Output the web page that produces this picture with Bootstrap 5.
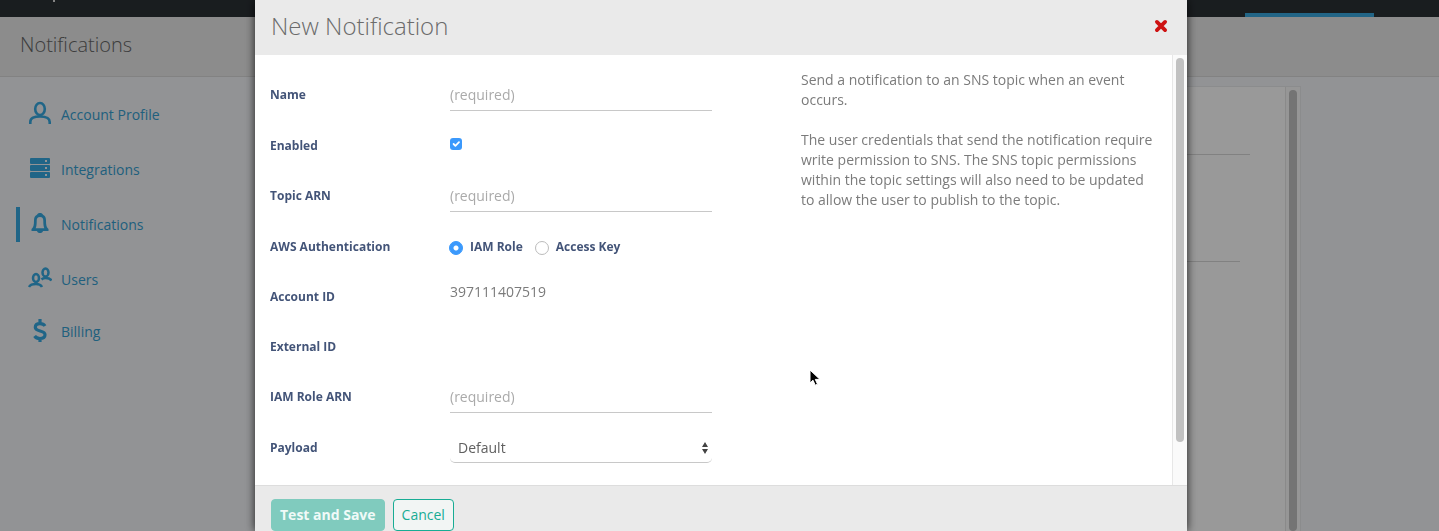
<!DOCTYPE html>
<html lang="en">
<head>
<meta charset="utf-8">
<meta name="viewport" content="width=device-width, initial-scale=1">
<title>New Notification</title>
<link rel="stylesheet" href="https://cdn.jsdelivr.net/npm/bootstrap@5.3.0/dist/css/bootstrap.min.css">
<style>
  body { font-family: "Open Sans", "Noto Sans", sans-serif; font-size: 14px; line-height: 20px; color: #7b7b7b; background: #f3f5f8; }
  .app-shell { height: 100vh; overflow: hidden; }
  .top-strip { height: 17px; background: #2b3135; padding-right: 65px; padding-left: 53px; }
  .brand-stem { width: 2px; height: 2px; background: #ddd; }
  .active-tab { width: 129px; height: 4px; background: #39a9df; }
  .page-head { height: 60px; padding: 0 20px; background: #e9e9e9; border-bottom: 1px solid #d9d9d9; }
  .page-head h1 { font-size: 20px; line-height: 56px; font-weight: 300; color: #666; }
  .side-nav { width: 260px; padding: 10px 16px; }
  .side-nav a { height: 55px; padding-left: 8px; border-left: 4px solid transparent; color: #36a0d2; gap: 9px; }
  .side-nav a::before { content: ""; width: 4px; height: 35px; flex: none; margin-left: -12px; margin-right: -1px; }
  .side-nav a.active::before { background: #36a9e1; }
  .side-nav a:last-child { height: 50px; }
  .side-nav svg { width: 24px; height: 24px; color: #36a9e1; flex: none; margin-bottom: 4px; }
  .panel-sheet { background: #fff; margin: 9px 138px 0 0; border: 1px solid #e8eaec; border-bottom: 0; }
  .sheet-body { padding-top: 67px; }
  .panel-sheet hr { margin: 0 35px 106px 0; border-color: #d8d8d8; opacity: 1; }
  .panel-sheet hr + hr { margin-right: 45px; }
  .scroll-track { width: 15px; border-left: 1px solid #e7e7e7; background: #fafafa; padding: 3px 4px 0 3px; flex: none; }
  .scroll-thumb { width: 8px; border-radius: 4px; background: #c1c1c1; }
  .backdrop-dim { --bs-backdrop-opacity: .4; }
  .notify-modal { padding-left: 3px !important; overflow: hidden; }
  .notify-modal .modal-dialog { max-width: 932px; height: 100vh; margin: 0 auto; }
  .notify-modal .modal-content { height: 100%; border: 0; border-radius: 0; box-shadow: 0 0 9px rgba(0,0,0,.8); color: inherit; }
  .notify-modal .modal-header { height: 55px; padding: 0 16px 4px; border: 0; border-radius: 0; background: #eaeaea; }
  .modal-title { font-size: 24px; line-height: 50px; font-weight: 300; color: #6b6b6b; }
  .close-x { width: 20px; height: 20px; color: #ce1212; }
  .form-pane { width: 530px; padding: 25px 0 0 15px; flex: none; }
  .field-row { display: flex; align-items: flex-start; min-height: 30px; margin-bottom: 20px; }
  .field-name { width: 180px; flex: none; font-size: 12px; line-height: 30px; font-weight: 700; color: #435478; }
  .choice-name { font-size: 12px; line-height: 30px; font-weight: 700; color: #435478; margin: 0 13px 0 7px; }
  .line-input { width: 262px; height: 31px; padding: 0 0 2px; font-size: 14px; line-height: 20px; border: 0; border-bottom: 1px solid #c8c8c8; border-radius: 0; background: transparent; }
  .line-input::placeholder { color: #aaa; }
  .payload-select { width: 262px; height: 30px; padding: 0 8px; font-size: 14px; line-height: 20px; color: #606060; border: 0; border-bottom: 1px solid #c8c8c8; border-radius: 5px;
    background: #fff url("data:image/svg+xml,%3Csvg xmlns='http://www.w3.org/2000/svg' viewBox='0 0 6 12'%3E%3Cpath fill='%23444' d='M0 5L3 0l3 5zM0 7h6L3 12z'/%3E%3C/svg%3E") no-repeat right 4px center / 6px 12px; }
  .tick { width: 12px; height: 12px; margin: 7px 0 0; border: 0; border-radius: 3px !important; }
  .tick:checked { background-color: #3b99fc; }
  .dot { width: 14px; height: 14px; margin: 9px 0 0 -1px; border-color: #bbb; }
  .dot:checked { border-color: #3b99fc; background-color: #3b99fc; background-image: radial-gradient(circle, #fff 0 2px, transparent 3px); }
  .help-pane { padding: 15px 17px 0 16px; }
  .help-pane p { margin-bottom: 20px; }
  .notify-modal .modal-footer { height: 46px; padding: 13px 16px 0; gap: 8px; align-items: flex-start; justify-content: flex-start; background: #eaeaea; border-top: 1px solid #ddd; border-radius: 0; flex-wrap: nowrap; }
  .modal-footer .btn { margin: 0; height: 32px; padding: 0 8px; font-size: 14px; line-height: 30px; border-radius: 4px; }
  .btn-save, .btn-save:disabled { background: #80cbbe; border-color: #80cbbe; color: #f0faf8; font-weight: 700; opacity: 1; }
  .btn-cancel { background: #f2f5f4; border-color: #18ac94; color: #18ac94; }
  .pointer { position: absolute; left: 809px; top: 369px; width: 12px; height: 18px; z-index: 2000; }
</style>
</head>
<body>
<div class="app-shell d-flex flex-column">
  <div class="top-strip d-flex justify-content-between">
    <span class="brand-stem"></span>
    <span class="active-tab align-self-end"></span>
  </div>
  <header class="page-head"><h1 class="m-0">Notifications</h1></header>
  <div class="d-flex flex-grow-1">
    <nav class="side-nav d-flex flex-column flex-shrink-0" aria-label="Account">
      <a href="#" class="d-flex align-items-center text-decoration-none">
        <svg viewBox="0 0 24 24" fill="none" stroke="currentColor" stroke-width="2.600"><ellipse cx="12" cy="8" rx="4.800" ry="6"/><path d="M2.300 23v-2c0-4 4-5.500 9.700-5.500s9.700 1.500 9.700 5.500v2"/></svg>
        Account Profile</a>
      <a href="#" class="d-flex align-items-center text-decoration-none">
        <svg viewBox="0 0 24 24" fill="currentColor"><path fill-rule="evenodd" d="M3 2h18q1 0 1 1v4q0 1-1 1H3Q2 8 2 7V3q0-1 1-1zm14 2v2h2V4zM3 9h18q1 0 1 1v4q0 1-1 1H3q-1 0-1-1v-4q0-1 1-1zm14 2v2h2v-2zM3 16h18q1 0 1 1v4q0 1-1 1H3q-1 0-1-1v-4q0-1 1-1zm14 2v2h2v-2z"/></svg>
        Integrations</a>
      <a href="#" class="active d-flex align-items-center text-decoration-none">
        <svg viewBox="0 0 24 24" fill="currentColor"><path fill-rule="evenodd" d="M12 2c1.500 0 2.500.6 3 1.700 2.300 1 3 3.300 3 5.800 0 4 .4 6.400 2 8l.5.500v2H15c-.4 1.400-1.500 2-3 2s-2.600-.6-3-2H3.500v-2l.5-.5c1.600-1.600 2-4 2-8C6 7 6.700 4.700 9 3.700 9.500 2.600 10.500 2 12 2zm0 4C9.500 6 8.700 7.500 8.700 10c0 3-.2 5.500-1 7.300h8.600c-.8-1.800-1-4.300-1-7.300 0-2.500-.8-4-3.300-4z"/></svg>
        Notifications</a>
      <a href="#" class="d-flex align-items-center text-decoration-none">
        <svg viewBox="0 0 24 24" fill="none" stroke="currentColor" stroke-width="2.500"><ellipse cx="8" cy="12" rx="3" ry="4"/><path d="M1 21c1-2 3.500-3 7-3s5 1 6 3M8 15v3"/><ellipse cx="17.500" cy="6.500" rx="3" ry="4"/><path d="M13.500 13.500c1-1 2.500-1.500 4-1.500 3 0 5 1 6 2.500M17.500 10v2"/></svg>
        Users</a>
      <a href="#" class="d-flex align-items-center text-decoration-none">
        <svg viewBox="0 0 24 24" fill="none" stroke="currentColor" stroke-width="3.200"><g transform="translate(0 1)"><path d="M17 7c-1-1.600-2.700-2.300-5-2.300-3 0-4.700 1.300-4.700 3.600 0 5 9.700 2.400 9.700 7.500 0 2.400-2 3.700-5 3.700-2.500 0-4.400-1-5.400-2.500M12 0v5m0 14v4"/></g></svg>
        Billing</a>
    </nav>
    <main class="panel-sheet d-flex flex-grow-1">
      <div class="sheet-body flex-grow-1"><hr><hr></div>
      <div class="scroll-track"><div class="scroll-thumb h-100"></div></div>
    </main>
  </div>
</div>

<div class="modal-backdrop show backdrop-dim"></div>
<div class="modal notify-modal d-block" tabindex="-1" role="dialog" aria-labelledby="dialogTitle">
  <div class="modal-dialog">
    <form class="modal-content">
      <div class="modal-header d-flex justify-content-between align-items-center">
        <h2 class="modal-title" id="dialogTitle">New Notification</h2>
        <button type="button" class="close-x btn p-0 border-0 d-flex align-items-center justify-content-center" aria-label="Close">
          <svg width="14" height="14" viewBox="0 0 14 14" stroke="currentColor" stroke-width="3.800" stroke-linecap="round"><path d="M2.900 2.900l8.200 8.200M11.100 2.900l-8.200 8.200"/></svg>
        </button>
      </div>
      <div class="modal-body p-0 d-flex overflow-hidden">
        <div class="form-pane">
          <div class="field-row"><label class="field-name" for="fName">Name</label><input class="form-control line-input" id="fName" type="text" placeholder="(required)"></div>
          <div class="field-row"><label class="field-name" for="fEnabled">Enabled</label><input class="form-check-input tick" id="fEnabled" type="checkbox" checked></div>
          <div class="field-row"><label class="field-name" for="fTopic">Topic ARN</label><input class="form-control line-input" id="fTopic" type="text" placeholder="(required)"></div>
          <div class="field-row" role="radiogroup" aria-labelledby="authName"><span class="field-name" id="authName">AWS Authentication</span>
            <input class="form-check-input dot" type="radio" name="auth" id="authRole" checked><label class="choice-name" for="authRole">IAM Role</label>
            <input class="form-check-input dot" type="radio" name="auth" id="authKey"><label class="choice-name" for="authKey">Access Key</label></div>
          <div class="field-row"><span class="field-name">Account ID</span><span>397111407519</span></div>
          <div class="field-row"><span class="field-name">External ID</span></div>
          <div class="field-row"><label class="field-name" for="fRole">IAM Role ARN</label><input class="form-control line-input" id="fRole" type="text" placeholder="(required)"></div>
          <div class="field-row"><label class="field-name" for="fPayload">Payload</label><select class="form-select payload-select" id="fPayload"><option>Default</option></select></div>
        </div>
        <div class="help-pane flex-grow-1">
          <p>Send a notification to an SNS topic when an event occurs.</p>
          <p>The user credentials that send the notification require write permission to SNS. The SNS topic permissions within the topic settings will also need to be updated to allow the user to publish to the topic.</p>
        </div>
        <div class="scroll-track"><div class="scroll-thumb" style="height:90%"></div></div>
      </div>
      <div class="modal-footer">
        <button type="submit" class="btn btn-save" disabled>Test and Save</button>
        <button type="button" class="btn btn-cancel">Cancel</button>
      </div>
    </form>
  </div>
</div>
<svg class="pointer" viewBox="0 0 12 18" aria-hidden="true"><path d="M1 1v13l3-2.800 2.200 5 2.300-1-2.200-4.800H11z" fill="#000" stroke="#fff"/></svg>
<script src="https://cdn.jsdelivr.net/npm/bootstrap@5.3.0/dist/js/bootstrap.bundle.min.js"></script>
</body>
</html>
